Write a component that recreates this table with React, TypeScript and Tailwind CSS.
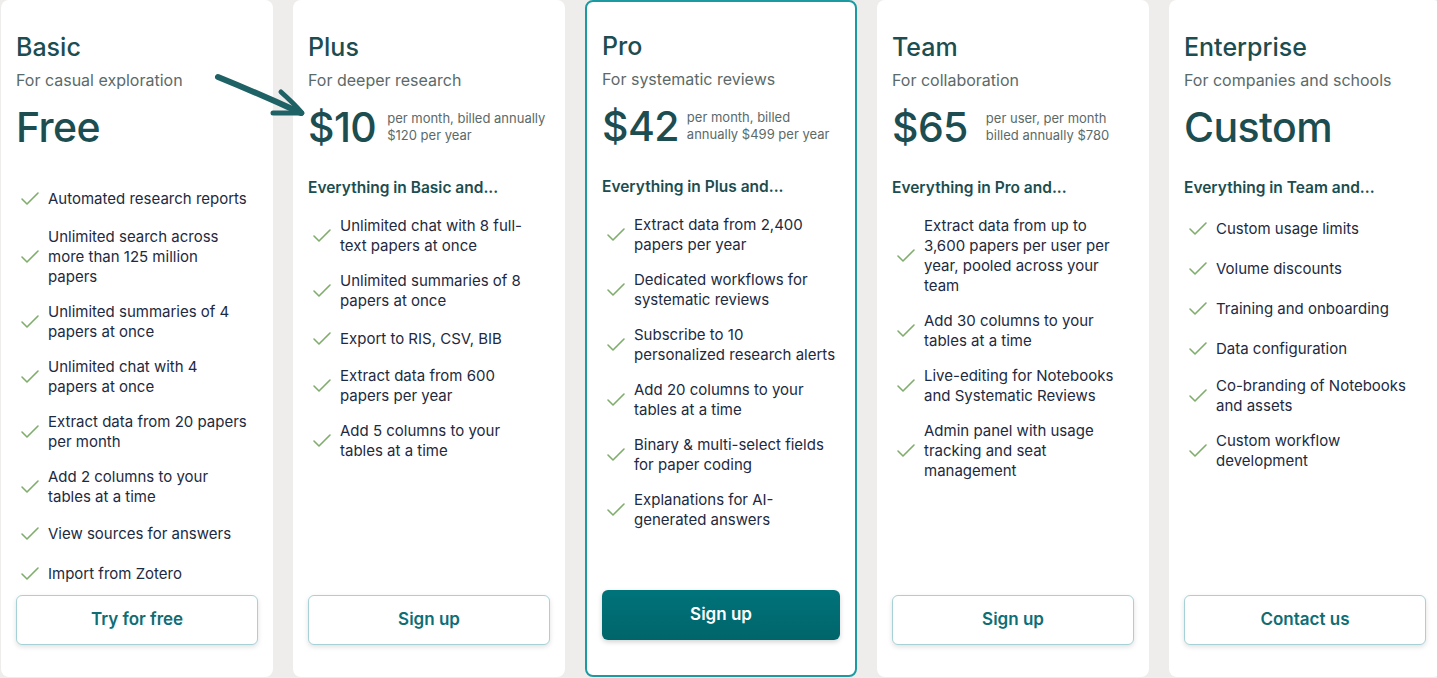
import React from "react";
import { Check } from "lucide-react";

type Plan = {
  name: string;
  sub: string;
  price: string;
  notes?: string[];
  noteGap?: string;
  heading?: string;
  features: string[][];
  button: string;
  featured?: boolean;
};

const plans: Plan[] = [
  {
    name: "Basic",
    sub: "For casual exploration",
    price: "Free",
    features: [
      ["Automated research reports"],
      ["Unlimited search across", "more than 125 million", "papers"],
      ["Unlimited summaries of 4", "papers at once"],
      ["Unlimited chat with 4", "papers at once"],
      ["Extract data from 20 papers", "per month"],
      ["Add 2 columns to your", "tables at a time"],
      ["View sources for answers"],
      ["Import from Zotero"],
    ],
    button: "Try for free",
  },
  {
    name: "Plus",
    sub: "For deeper research",
    price: "$10",
    notes: ["per month, billed annually", "$120 per year"],
    noteGap: "ml-[11px]",
    heading: "Everything in Basic and...",
    features: [
      ["Unlimited chat with 8 full-", "text papers at once"],
      ["Unlimited summaries of 8", "papers at once"],
      ["Export to RIS, CSV, BIB"],
      ["Extract data from 600", "papers per year"],
      ["Add 5 columns to your", "tables at a time"],
    ],
    button: "Sign up",
  },
  {
    name: "Pro",
    sub: "For systematic reviews",
    price: "$42",
    notes: ["per month, billed", "annually $499 per year"],
    noteGap: "ml-[8px]",
    heading: "Everything in Plus and...",
    features: [
      ["Extract data from 2,400", "papers per year"],
      ["Dedicated workflows for", "systematic reviews"],
      ["Subscribe to 10", "personalized research alerts"],
      ["Add 20 columns to your", "tables at a time"],
      ["Binary & multi-select fields", "for paper coding"],
      ["Explanations for AI-", "generated answers"],
    ],
    button: "Sign up",
    featured: true,
  },
  {
    name: "Team",
    sub: "For collaboration",
    price: "$65",
    notes: ["per user, per month", "billed annually $780"],
    noteGap: "ml-[18px]",
    heading: "Everything in Pro and...",
    features: [
      ["Extract data from up to", "3,600 papers per user per", "year, pooled across your", "team"],
      ["Add 30 columns to your", "tables at a time"],
      ["Live-editing for Notebooks", "and Systematic Reviews"],
      ["Admin panel with usage", "tracking and seat", "management"],
    ],
    button: "Sign up",
  },
  {
    name: "Enterprise",
    sub: "For companies and schools",
    price: "Custom",
    heading: "Everything in Team and...",
    features: [
      ["Custom usage limits"],
      ["Volume discounts"],
      ["Training and onboarding"],
      ["Data configuration"],
      ["Co-branding of Notebooks", "and assets"],
      ["Custom workflow", "development"],
    ],
    button: "Contact us",
  },
];

function Card({ plan }: { plan: Plan }) {
  const f = plan.featured;
  return (
    <div
      className={
        "flex h-[677px] w-[272px] shrink-0 flex-col rounded-lg bg-white px-[15px] " +
        (f ? "border-2 border-[#1b9ba1] pt-[28px] pb-[35px]" : "pt-[31px] pb-[32px]")
      }
    >
      <div className="text-[25px] font-medium leading-[32px] text-[#1c4d50]">{plan.name}</div>
      <div className="mt-[5px] text-[16px] leading-[24px] text-[#5b6a69]">{plan.sub}</div>
      <div className="mt-[11px] flex h-[48px] items-center">
        <div className="text-[41px] font-medium leading-[48px] tracking-[-0.6px] text-[#1c4d50]">
          {plan.price}
        </div>
        {plan.notes && (
          <div className={"text-[13px] leading-[17px] text-[#5b6a69] " + (plan.noteGap ?? "")}>
            {plan.notes.map((n, i) => (
              <div key={i} className="whitespace-nowrap">
                {n}
              </div>
            ))}
          </div>
        )}
      </div>
      {plan.heading && (
        <div className="mt-[25px] text-[15.5px] font-semibold leading-[24px] text-[#1c4d50]">
          {plan.heading}
        </div>
      )}
      <ul className={"flex flex-col gap-[15px] " + (plan.heading ? "mt-[16px]" : "mt-[35.5px]")}>
        {plan.features.map((lines, i) => (
          <li key={i} className="flex min-h-[25px] items-center">
            <Check
              size={24}
              strokeWidth={1.6}
              className="ml-[2px] mr-[6px] shrink-0 text-[#7fad6c]"
            />
            <div className="text-[15px] leading-[20px] text-[#1d2a40]">
              {lines.map((l, j) => (
                <div key={j} className="whitespace-nowrap">
                  {l}
                </div>
              ))}
            </div>
          </li>
        ))}
      </ul>
      <div className="mt-auto">
        {f ? (
          <button className="flex h-[50px] w-full items-center justify-center rounded-md bg-gradient-to-b from-[#00737a] to-[#00656b] text-[17px] font-semibold text-white shadow-[0_2px_5px_rgba(0,0,0,0.18)]">
            {plan.button}
          </button>
        ) : (
          <button className="flex h-[50px] w-full items-center justify-center rounded-md border border-[#a6d2d7] bg-white text-[17px] font-semibold text-[#0d6e75] shadow-[0_2px_5px_rgba(0,0,0,0.12)]">
            {plan.button}
          </button>
        )}
      </div>
    </div>
  );
}

export default function App() {
  return (
    <div
      className="relative h-[678px] w-[1437px] overflow-hidden bg-[#efedeb]"
      style={{ fontFamily: "Inter, 'Noto Sans', sans-serif" }}
    >
      <div className="flex gap-[20px] pl-[1px]">
        {plans.map((p) => (
          <Card key={p.name} plan={p} />
        ))}
      </div>
      <svg
        className="pointer-events-none absolute left-0 top-0"
        width="330"
        height="140"
        viewBox="0 0 330 140"
      >
        <path
          d="M218 77 C 245 88, 275 101, 301 113"
          fill="none"
          stroke="#1e6266"
          strokeWidth="6"
          strokeLinecap="round"
        />
        <path
          d="M281 92 C 290 100, 297 107, 302 113 C 293 113, 283 113, 273 113"
          fill="none"
          stroke="#1e6266"
          strokeWidth="5"
          strokeLinecap="round"
          strokeLinejoin="round"
        />
      </svg>
    </div>
  );
}
